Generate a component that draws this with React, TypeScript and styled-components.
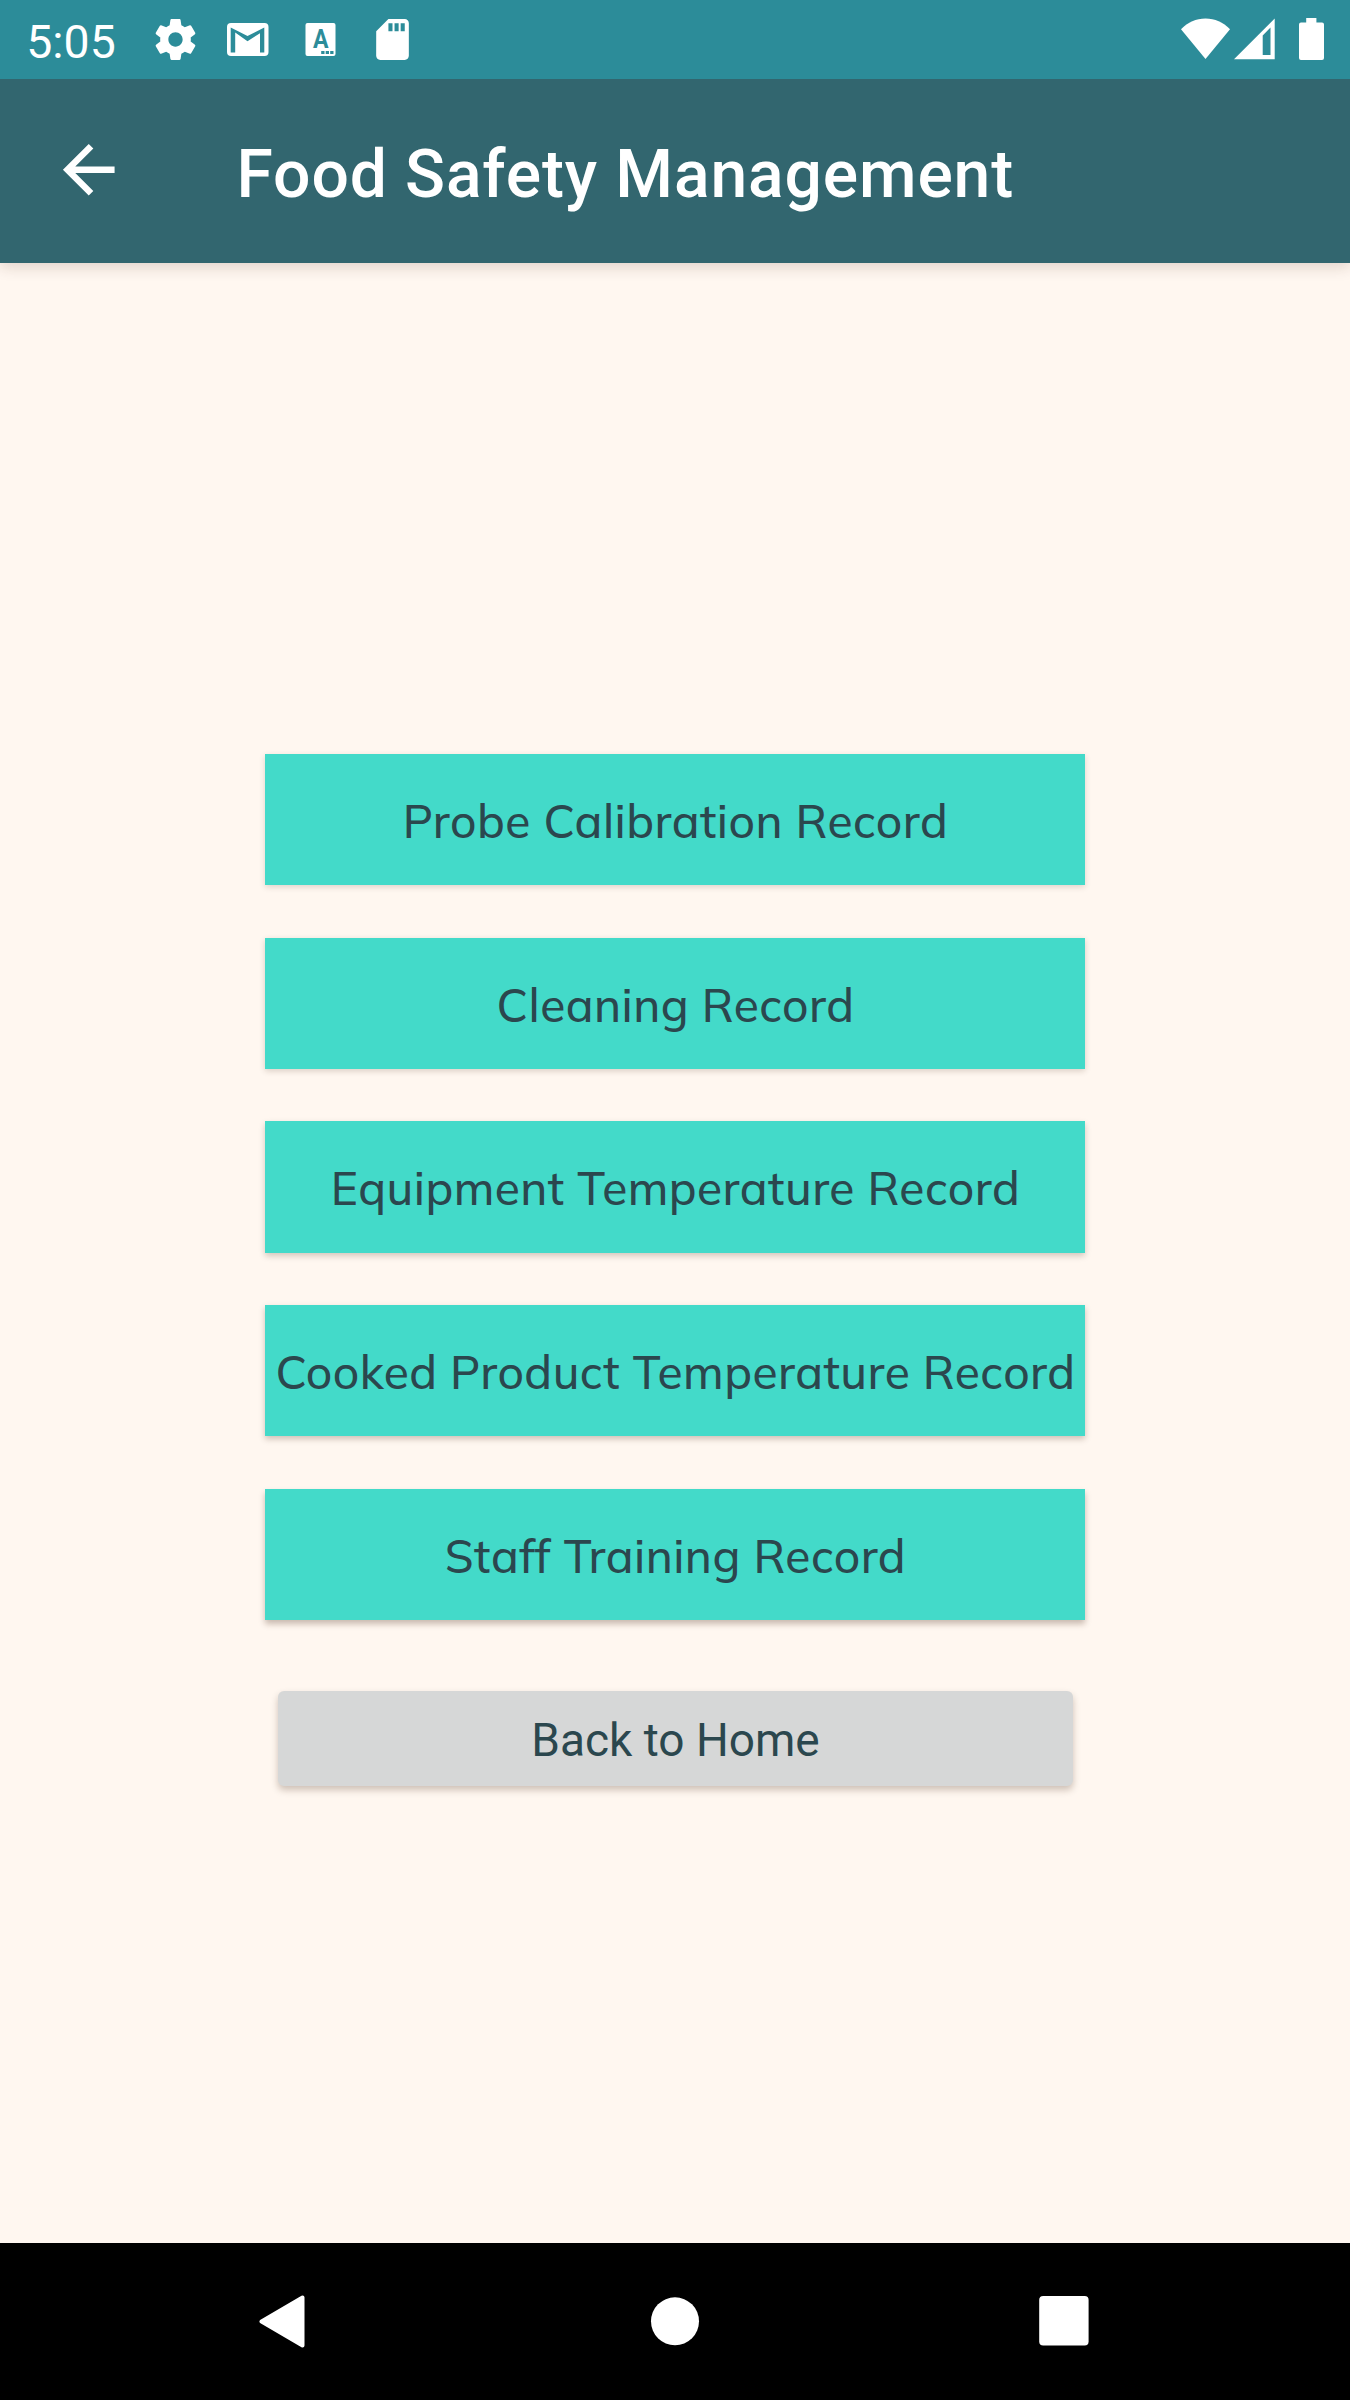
import React from "react";
import styled, { createGlobalStyle } from "styled-components";
import { MdArrowBack, MdSdCard } from "react-icons/md";

const GlobalStyle = createGlobalStyle`
  * { box-sizing: border-box; }
  body { margin: 0; background: #fff7f0; }
`;

const Screen = styled.div`
  display: flex;
  flex-direction: column;
  width: 1350px;
  height: 2400px;
  background: #fff7f0;
  font-family: Roboto, "Liberation Sans", sans-serif;
  overflow: hidden;
`;

const StatusBar = styled.header`
  position: relative;
  z-index: 1;
  display: flex;
  align-items: center;
  flex: none;
  height: 78.75px;
  padding: 0 26px 0 26.25px;
  background: #2c8c99;
  color: #fff;
`;

const Clock = styled.time`
  flex: none;
  width: 124.25px;
  padding-top: 5px;
  font-size: 46.4px;
`;

const Notifications = styled.div`
  display: flex;
  align-items: center;
  gap: 23.5px;
  flex: 1;

  svg { width: 49px; height: 49px; }
`;

const SystemIcons = styled.div`
  display: flex;
  align-items: center;
`;

const SystemIcon = styled.svg<{ $w: number; $gap?: number }>`
  display: block;
  width: ${(p) => p.$w}px;
  height: 42px;
  margin-left: ${(p) => p.$gap ?? 0}px;
`;

const Toolbar = styled.div`
  display: flex;
  align-items: center;
  flex: none;
  height: 183.75px;
  padding-left: 50px;
  background: #32666f;
  color: #fff;
  box-shadow: 0 4px 14px rgba(60, 30, 10, 0.16);
`;

const BackArrow = styled.button`
  display: flex;
  width: 186.5px;
  padding: 0 0 1px;
  border: 0;
  background: none;
  color: inherit;

  svg { width: 77.5px; height: 77.5px; }
`;

const Title = styled.h1`
  margin: 0;
  padding-top: 7px;
  font-size: 66px;
  font-weight: 500;
  letter-spacing: 0.88px;
  white-space: nowrap;
`;

const Menu = styled.main`
  display: flex;
  flex: 1;
  flex-direction: column;
  align-items: center;
  padding-top: 491.25px;
`;

const RecordList = styled.nav`
  display: flex;
  flex-direction: column;
  gap: 52.5px;
  width: 820px;
`;

const RecordButton = styled.button<{ $depth: number }>`
  display: flex;
  align-items: center;
  justify-content: center;
  height: 131.25px;
  padding: 3px 0 0 1px;
  border: 0;
  background: #43dac9;
  color: #2b474e;
  font: 500 46px Mulish, Lato, sans-serif;
  letter-spacing: 0.46px;
  white-space: nowrap;
  box-shadow: 0 ${(p) => 2 + p.$depth * 0.4}px 6px rgba(60, 30, 10, ${(p) => 0.16 + p.$depth * 0.03});
`;

const HomeButton = styled.button`
  display: flex;
  align-items: center;
  justify-content: center;
  width: 795px;
  height: 94.5px;
  margin-top: 71px;
  padding: 4px 0 0 1px;
  border: 0;
  border-radius: 6px;
  background: #d6d7d7;
  color: #2b474e;
  font: 400 46px Roboto, sans-serif;
  box-shadow: 0 4px 7px rgba(60, 30, 10, 0.25);
`;

const NavigationBar = styled.footer`
  display: flex;
  align-items: center;
  justify-content: space-between;
  flex: none;
  height: 157.5px;
  padding: 0 261px 0 259px;
  background: #000;
`;

const NavIcon = styled.svg<{ $w: number }>`
  display: block;
  width: ${(p) => p.$w}px;
  height: 54px;
`;

const records = [
  "Probe Calibration Record",
  "Cleaning Record",
  "Equipment Temperature Record",
  "Cooked Product Temperature Record",
  "Staff Training Record",
];

const GearIcon = () => (
  <svg viewBox="0 0 24 24" fill="#fff">
    <path d="M19.43 12.98c.04-.32.07-.64.07-.98s-.03-.66-.07-.98l2.11-1.65c.19-.15.24-.42.12-.64l-2-3.46c-.12-.22-.39-.3-.61-.22l-2.49 1c-.52-.4-1.08-.73-1.69-.98l-.38-2.65C14.46 2.18 14.25 2 14 2h-4c-.25 0-.46.18-.49.42l-.38 2.65c-.61.25-1.17.59-1.69.98l-2.49-1c-.23-.09-.49 0-.61.22l-2 3.46c-.13.22-.07.49.12.64l2.11 1.65c-.04.32-.07.65-.07.98s.03.66.07.98l-2.11 1.65c-.19.15-.24.42-.12.64l2 3.46c.12.22.39.3.61.22l2.49-1c.52.4 1.08.73 1.69.98l.38 2.65c.03.24.24.42.49.42h4c.25 0 .46-.18.49-.42l.38-2.65c.61-.25 1.17-.59 1.69-.98l2.49 1c.23.09.49 0 .61-.22l2-3.46c.12-.22.07-.49-.12-.64l-2.11-1.65zM12 15.5c-1.93 0-3.5-1.57-3.5-3.5s1.57-3.5 3.5-3.5 3.5 1.57 3.5 3.5-1.57 3.5-3.5 3.5z" />
  </svg>
);

const MailIcon = () => (
  <svg viewBox="0 0 49 49">
    <rect x="4" y="8" width="41.5" height="33" rx="4" fill="#fff" />
    <path d="M7.7 37.5V12.5L24.5 21L41.3 12.5V37.5H37V18.2L24.5 26.3L12.2 17.5V37.5Z" fill="#2c8c99" />
  </svg>
);

const KeyboardIcon = () => (
  <svg viewBox="0 0 49 49">
    <rect x="9.5" y="8" width="30" height="33" rx="2" fill="#fff" />
    <text x="17" y="33" textLength="15.5" lengthAdjust="spacingAndGlyphs" fontFamily="Roboto" fontWeight="700" fontSize="25" fill="#2c8c99">A</text>
    <path d="M25.2 36h3.3v3h-3.3zM29.7 36h3.3v3h-3.3zM34.2 36h3.3v3h-3.3z" fill="#2c8c99" />
  </svg>
);

export default function App() {
  return (
    <Screen>
      <GlobalStyle />
      <StatusBar>
        <Clock>5:05</Clock>
        <Notifications>
          <GearIcon />
          <MailIcon />
          <KeyboardIcon />
          <MdSdCard />
        </Notifications>
        <SystemIcons>
          <SystemIcon $w={49} viewBox="0 0 49 42">
            <path d="M24.5 41L0 11.2C7 4.2 15 .5 24.5 .5S42 4.2 49 11.2Z" fill="#fff" />
          </SystemIcon>
          <SystemIcon $w={41} $gap={4.5} viewBox="0 0 41 42">
            <path d="M0 41.3L40.7 .5V41.3ZM28.7 17.5V37H36.5V9.5Z" fill="#fff" fillRule="evenodd" />
          </SystemIcon>
          <SystemIcon $w={25} $gap={23.8} viewBox="0 0 25 42">
            <path d="M7.2 0H17.4V4.6H23Q25 4.6 25 6.6V40Q25 42 23 42H2Q0 42 0 40V6.6Q0 4.6 2 4.6H7.2Z" fill="#fff" />
          </SystemIcon>
        </SystemIcons>
      </StatusBar>
      <Toolbar>
        <BackArrow aria-label="Back">
          <MdArrowBack />
        </BackArrow>
        <Title>Food Safety Management</Title>
      </Toolbar>
      <Menu>
        <RecordList>
          {records.map((label, i) => (
            <RecordButton key={label} $depth={i}>
              {label}
            </RecordButton>
          ))}
        </RecordList>
        <HomeButton>Back to Home</HomeButton>
      </Menu>
      <NavigationBar>
        <NavIcon $w={52} viewBox="0 0 52 54">
          <path d="M2.5 27.5L43.5 3.5V51.5Z" fill="#fff" stroke="#fff" strokeWidth="4" strokeLinejoin="round" />
        </NavIcon>
        <NavIcon $w={50} viewBox="0 0 50 54">
          <circle cx="25" cy="27.3" r="24" fill="#fff" />
        </NavIcon>
        <NavIcon $w={50} viewBox="0 0 50 54">
          <rect x="0.2" y="2" width="49.4" height="49.5" rx="4" fill="#fff" />
        </NavIcon>
      </NavigationBar>
    </Screen>
  );
}
